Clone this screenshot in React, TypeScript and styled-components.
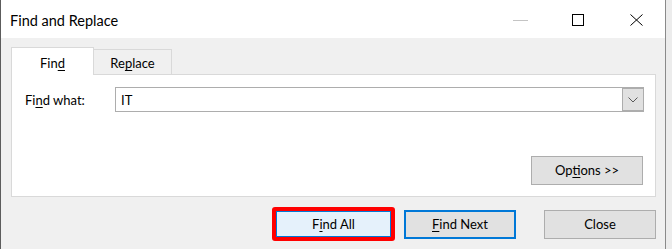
import React, { FC } from "react";
import styled, { createGlobalStyle } from "styled-components";

const GlobalStyle = createGlobalStyle`
  html, body {
    margin: 0;
    padding: 0;
    background: #ececec;
  }

  body {
    width: 672px;
    height: 249px;
    overflow: hidden;
    font-family: Lato, "Noto Sans", "Liberation Sans", sans-serif;
    color: #000;
  }
`;

const Window = styled.div`
  width: 664px;
  height: 249px;
  border-left: 1px solid #5c5c5c;
  border-right: 1px solid #8a8a8a;
  background: #f0f0f0;
  display: flex;
  flex-direction: column;
`;

const TitleBar = styled.div`
  height: 38px;
  background: #fff;
  display: flex;
  align-items: center;
  padding-left: 9px;
`;

const TitleText = styled.div`
  flex: 1;
  font-size: 14.5px;
  padding-top: 2px;
`;

const Controls = styled.div`
  display: flex;
  height: 100%;
`;

const ControlButton = styled.div`
  width: 58px;
  height: 100%;
  display: flex;
  align-items: center;
  justify-content: center;
  padding-top: 2px;
  box-sizing: border-box;
`;

const Body = styled.div`
  flex: 1;
  padding: 9px 9px 0 10px;
  display: flex;
  flex-direction: column;
`;

const TabRow = styled.div`
  display: flex;
  align-items: flex-end;
  height: 27px;
`;

const Tab = styled.div<{ $active?: boolean; $width: number }>`
  width: ${(p) => p.$width}px;
  box-sizing: border-box;
  height: ${(p) => (p.$active ? 28 : 25)}px;
  margin-bottom: ${(p) => (p.$active ? -1 : 0)}px;
  background: ${(p) => (p.$active ? "#fff" : "#f0f0f0")};
  border: 1px solid #d9d9d9;
  border-bottom: none;
  border-left: ${(p) => (p.$active ? "1px solid #d9d9d9" : "none")};
  position: relative;
  z-index: ${(p) => (p.$active ? 1 : 0)};
  display: flex;
  justify-content: center;
  align-items: flex-start;
  padding-top: ${(p) => (p.$active ? 7 : 5)}px;
  font-size: 13px;
`;

const Panel = styled.div`
  height: 123px;
  box-sizing: border-box;
  background: #fff;
  border: 1px solid #d9d9d9;
  padding: 12px 11px 11px 13px;
  display: flex;
  flex-direction: column;
  justify-content: space-between;
`;

const FieldRow = styled.div`
  display: flex;
  align-items: center;
`;

const Label = styled.div`
  width: 90px;
  font-size: 13px;
`;

const Combo = styled.div`
  flex: 1;
  height: 25px;
  box-sizing: border-box;
  border: 1px solid #adadad;
  display: flex;
  align-items: center;
  font-size: 13px;
`;

const ComboValue = styled.div`
  flex: 1;
  padding-left: 5px;
`;

const DropButton = styled.div`
  width: 21px;
  height: 23px;
  box-sizing: border-box;
  border: 1px solid #adadad;
  border-right: none;
  background: #e1e1e1;
  display: flex;
  align-items: center;
  justify-content: center;
`;

const PanelFooter = styled.div`
  display: flex;
  justify-content: flex-end;
  padding-right: 1px;
`;

const Button = styled.div<{ $focused?: boolean; $gap?: number }>`
  width: 112px;
  height: 29px;
  box-sizing: border-box;
  margin-left: ${(p) => p.$gap || 0}px;
  border: ${(p) => (p.$focused ? "2px solid #0078d7" : "1px solid #adadad")};
  background: #e1e1e1;
  display: flex;
  align-items: center;
  justify-content: center;
  font-size: 13px;
  padding-bottom: 1px;
`;

const Footer = styled.div`
  display: flex;
  align-items: center;
  padding: 10px 0 0 261px;
`;

const Highlight = styled.div`
  width: 123px;
  height: 34px;
  box-sizing: border-box;
  border: 4px solid #ff0000;
  border-radius: 3px;
  display: flex;
`;

const DefaultButton = styled.div`
  flex: 1;
  box-sizing: border-box;
  border: 1px solid #0078d7;
  background: #e5f1fb;
  display: flex;
  align-items: center;
  justify-content: center;
  font-size: 13px;
  padding-bottom: 1px;
`;

const Key = styled.span`
  text-decoration: underline;
  text-underline-offset: 2px;
  text-decoration-thickness: 1px;
`;

const App: FC = () => {
  return (
    <>
      <GlobalStyle />
      <Window>
        <TitleBar>
          <TitleText>Find and Replace</TitleText>
          <Controls>
            <ControlButton>
              <svg width="15" height="11" viewBox="0 0 15 11">
                <line x1="0" y1="5.5" x2="15" y2="5.5" stroke="#c4c4c4" />
              </svg>
            </ControlButton>
            <ControlButton>
              <svg width="12" height="12" viewBox="0 0 12 12">
                <rect x="0.5" y="0.5" width="11" height="11" fill="none" stroke="#000" />
              </svg>
            </ControlButton>
            <ControlButton>
              <svg width="13" height="12" viewBox="0 0 13 12">
                <path d="M0.5 0.5 L12.5 11.5 M12.5 0.5 L0.5 11.5" stroke="#000" strokeWidth="1" fill="none" />
              </svg>
            </ControlButton>
          </Controls>
        </TitleBar>
        <Body>
          <TabRow>
            <Tab $active $width={83}>
              <span>
                Fin<Key>d</Key>
              </span>
            </Tab>
            <Tab $width={78}>
              <span>
                Re<Key>p</Key>lace
              </span>
            </Tab>
          </TabRow>
          <Panel>
            <FieldRow>
              <Label>
                Fi<Key>n</Key>d what:
              </Label>
              <Combo>
                <ComboValue>IT</ComboValue>
                <DropButton>
                  <svg width="10" height="6" viewBox="0 0 10 6">
                    <path d="M0.5 0.5 L5 5 L9.5 0.5" stroke="#5a5a5a" fill="none" />
                  </svg>
                </DropButton>
              </Combo>
            </FieldRow>
            <PanelFooter>
              <Button>
                <span>
                  Op<Key>t</Key>ions &gt;&gt;
                </span>
              </Button>
            </PanelFooter>
          </Panel>
          <Footer>
            <Highlight>
              <DefaultButton>
                <span>
                  F<Key>i</Key>nd All
                </span>
              </DefaultButton>
            </Highlight>
            <Button $focused $gap={9}>
              <span>
                <Key>F</Key>ind Next
              </span>
            </Button>
            <Button $gap={28}>Close</Button>
          </Footer>
        </Body>
      </Window>
    </>
  );
};

export default App;
